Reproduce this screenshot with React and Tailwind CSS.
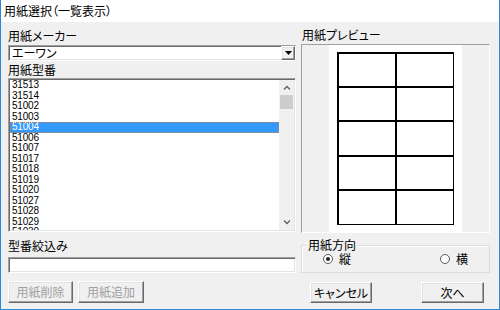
const codes = [
  "31513", "31514", "51002", "51003", "51004", "51006", "51007",
  "51017", "51018", "51019", "51020", "51027", "51028", "51029", "51030",
]

const jp = "font-['Noto_Sans_CJK_JP',sans-serif] [font-feature-settings:'palt']"
const sunken = "border border-t-[#a0a0a0] border-l-[#a0a0a0] border-r-white border-b-white shadow-[inset_1px_1px_0_#696969,inset_-1px_-1px_0_#e3e3e3]"
const raised = "border border-t-white border-l-white border-r-[#696969] border-b-[#696969] shadow-[inset_-1px_-1px_0_#a0a0a0,inset_1px_1px_0_#e3e3e3] bg-[#f0f0f0]"

function Button({ children, disabled, className }) {
  return (
    <div className={`${raised} ${className} flex items-center justify-center text-[12px] leading-none ${disabled ? "text-[#a0a0a0]" : "text-black"}`}>
      {children}
    </div>
  )
}

function Radio({ checked }) {
  return (
    <div className="w-[10px] h-[10px] rounded-full border border-[#5a5a5a] bg-white flex items-center justify-center">
      {checked && <div className="w-[4px] h-[4px] rounded-full bg-[#222]" />}
    </div>
  )
}

export default function App() {
  return (
    <div className={`w-[500px] h-[310px] flex flex-col border-l border-r border-b border-[#2b88d8] bg-[#f0f0f0] text-black ${jp}`}>
      <div className="h-[22px] bg-white flex items-center pl-[3px] text-[12px]">用紙選択（一覧表示）</div>

      <div className="flex flex-1 pl-[7px] gap-[5px]">
        {/* left column */}
        <div className="w-[288px] flex flex-col">
          <div className="mt-[7px] h-[14px] leading-[14px] text-[12px]">用紙メーカー</div>
          <div className={`mt-[2px] h-[16px] bg-white flex items-center ${sunken}`}>
            <span className="flex-1 pl-[3px] text-[12px] leading-none">エーワン</span>
            <div className={`w-[14px] h-[14px] ${raised} flex items-center justify-center`}>
              <svg width="7" height="4" viewBox="0 0 7 4"><path d="M0 0h7L3.5 4z" fill="#000" /></svg>
            </div>
          </div>

          <div className="mt-[2px] h-[14px] leading-[14px] text-[12px]">用紙型番</div>
          <div className={`mt-[1px] h-[154px] bg-white flex overflow-hidden ${sunken} p-px`}>
            <div className="flex-1 flex flex-col overflow-hidden font-['Liberation_Sans',sans-serif] text-[10px] tracking-[-0.2px]">
              {codes.map((c) => (
                <div
                  key={c}
                  className={`h-[10.5px] shrink-0 leading-[10.5px] pl-[2px] ${c === "51004" ? "bg-[#3399ff] text-white outline outline-dotted outline-[#c08040] -outline-offset-1" : ""}`}
                >
                  {c}
                </div>
              ))}
            </div>
            <div className="w-[15px] bg-[#f0f0f0] flex flex-col items-center">
              <div className="h-[15px] flex items-center justify-center">
                <svg width="8" height="5" viewBox="0 0 8 5"><path d="M1 4.5L4 1.5L7 4.5" stroke="#606060" strokeWidth="1.3" fill="none" /></svg>
              </div>
              <div className="w-[13px] h-[14px] bg-[#cdcdcd]" />
              <div className="flex-1" />
              <div className="h-[15px] flex items-center justify-center">
                <svg width="8" height="5" viewBox="0 0 8 5"><path d="M1 0.5L4 3.5L7 0.5" stroke="#606060" strokeWidth="1.3" fill="none" /></svg>
              </div>
            </div>
          </div>

          <div className="mt-[7px] h-[14px] leading-[14px] text-[12px]">型番絞込み</div>
          <div className={`mt-[4px] h-[16px] bg-white ${sunken}`} />

          <div className="mt-[8px] flex gap-[5px]">
            <Button disabled className="w-[65px] h-[22px]">用紙削除</Button>
            <Button disabled className="w-[66px] h-[22px]">用紙追加</Button>
          </div>
        </div>

        {/* right column */}
        <div className="w-[189px] flex flex-col">
          <div className="mt-[6px] h-[14px] leading-[14px] text-[12px] pl-[1px]">用紙プレビュー</div>
          <div className="mt-[2px] h-[189px] border border-t-[#a0a0a0] border-l-[#a0a0a0] border-r-white border-b-white flex justify-center">
            <div className="w-[133px] bg-white py-[7px] flex justify-center">
              <div className="w-[117px] grid grid-cols-2 grid-rows-5 gap-[2px] p-[1.5px] bg-black">
                {Array.from({ length: 10 }).map((_, i) => (
                  <div key={i} className="bg-white" />
                ))}
              </div>
            </div>
          </div>

          <div className="relative mt-[12px] h-[28px] border border-[#dcdcdc] shadow-[inset_1px_1px_0_#fff] flex items-center">
            <span className="absolute -top-[8px] left-[5px] bg-[#f0f0f0] px-px text-[12px] leading-[14px]">用紙方向</span>
            <div className="flex items-center gap-[6px] ml-[21px] text-[12px] leading-none">
              <Radio checked />
              <span>縦</span>
            </div>
            <div className="flex items-center gap-[6px] ml-auto mr-[21px] text-[12px] leading-none">
              <Radio />
              <span>横</span>
            </div>
          </div>

          <div className="mt-[9px] flex justify-between pl-[9px] pr-[6px]">
            <Button className="w-[62px] h-[21px]">キャンセル</Button>
            <Button className="w-[63px] h-[21px]">次へ</Button>
          </div>
        </div>
      </div>
    </div>
  )
}
